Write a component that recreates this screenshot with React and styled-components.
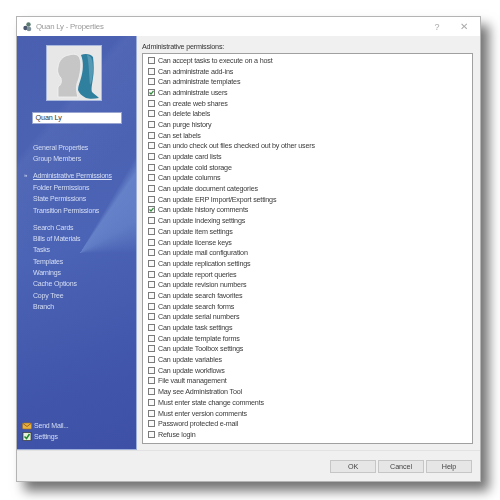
import styled, { createGlobalStyle } from 'styled-components'

const Global = createGlobalStyle`
    html, body {
        margin: 0;
        padding: 0;
        width: 500px;
        height: 500px;
        overflow: hidden;
        background: #fff;
    }
    body {
        font-family: "Liberation Sans", sans-serif;
    }
`;

const Page = styled.div`
    width: 500px;
    height: 500px;
    padding: 16px 0 0 16px;
    box-sizing: border-box;
`;

const Win = styled.div`
    width: 465px;
    height: 466px;
    box-sizing: border-box;
    border: 1px solid #b4b4b4;
    background: #f0f0f0;
    display: flex;
    flex-direction: column;
    box-shadow: 8px 9px 11px rgba(0, 0, 0, 0.55);
    filter: blur(0.4px);
`;

const TitleBar = styled.div`
    height: 19px;
    flex: none;
    background: #fff;
    display: flex;
    align-items: center;
    padding: 0 11px 0 6px;
    color: #999;
    font-size: 7.8px;
    letter-spacing: -0.2px;
`;

const TitleText = styled.span`
    margin-left: 4px;
    flex: 1;
`;

const TitleButton = styled.span`
    font-size: ${p => p.$size || 9}px;
    color: #aaa;
    width: 10px;
    margin-left: ${p => p.$gap || 0}px;
    text-align: center;
`;

const Body = styled.div`
    height: 414px;
    flex: none;
    display: flex;
`;

const Sidebar = styled.div`
    width: 120px;
    flex: none;
    box-sizing: border-box;
    padding: 9px 0 0;
    display: flex;
    flex-direction: column;
    align-items: center;
    border-right: 1px solid #9fb0da;
    border-bottom: 1px solid #9fb0da;
    background:
        conic-gradient(from 30deg at 63px 217px, transparent 0, rgba(135, 170, 228, 0.42) 5deg, rgba(135, 170, 228, 0.34) 30deg, transparent 60deg),
        linear-gradient(130deg, transparent 0 22%, rgba(130, 155, 215, 0.12) 24%, transparent 42%),
        linear-gradient(160deg, #4a5fb0 0, #4c64b5 50%, #4258ac 75%, #3d50a6 100%);
`;

const Avatar = styled.div`
    width: 56px;
    height: 56px;
    margin-right: 6px;
    background: #e7e7e7;
    border: 1px solid #a8b8de;
    box-sizing: border-box;
    flex: none;
`;

const NameField = styled.div`
    width: 90px;
    height: 12px;
    margin-top: 11px;
    box-sizing: border-box;
    background: #fff;
    border: 1px solid #9aa6d0;
    color: #333;
    font-size: 7.2px;
    letter-spacing: -0.1px;
    line-height: 10px;
    padding-left: 3px;
`;

const NavWrap = styled.div`
    align-self: stretch;
    padding: 18px 0 0 16px;
    display: flex;
    flex-direction: column;
    gap: 5.8px;
    flex: 1;
`;

const NavGroup = styled.div`
    display: flex;
    flex-direction: column;
`;

const NavLink = styled.div`
    position: relative;
    height: 11.35px;
    line-height: 11.35px;
    font-size: 7px;
    letter-spacing: -0.2px;
    white-space: nowrap;
    color: #d5def5;
    text-decoration: ${p => (p.$active ? 'underline' : 'none')};
    &:before {
        content: ${p => (p.$active ? "'»'" : 'none')};
        position: absolute;
        left: -9px;
        font-size: 6px;
    }
`;

const Footer = styled.div`
    padding: 0 0 7px 5px;
    align-self: stretch;
    display: flex;
    flex-direction: column;
`;

const FooterLink = styled.div`
    display: flex;
    align-items: center;
    gap: 2px;
    height: 11px;
    font-size: 7px;
    letter-spacing: -0.2px;
    color: #d5def5;
`;

const Main = styled.div`
    flex: 1;
    min-width: 0;
    padding: 5px 7px 0 5px;
    display: flex;
    flex-direction: column;
`;

const Caption = styled.div`
    font-size: 7.2px;
    letter-spacing: -0.2px;
    height: 12px;
    line-height: 11px;
    color: #333;
`;

const ListBox = styled.div`
    height: 391px;
    box-sizing: border-box;
    background: #fff;
    border: 1px solid #a0a0a0;
    padding: 1px 0 0 5px;
    display: flex;
    flex-direction: column;
`;

const Row = styled.div`
    height: 10.69px;
    flex: none;
    display: flex;
    align-items: center;
    gap: 3px;
    font-size: 7.2px;
    letter-spacing: -0.2px;
    color: #3a3a3a;
    white-space: nowrap;
`;

const Box = styled.span`
    width: 7px;
    height: 7px;
    flex: none;
    box-sizing: border-box;
    border: 1px solid #7a7a7a;
    background: #fafafa;
    display: flex;
`;

const BottomBar = styled.div`
    flex: 1;
    display: flex;
    align-items: center;
    justify-content: flex-end;
    gap: 2px;
    padding-right: 8px;
    border-top: 1px solid #e2e2e2;
`;

const Button = styled.div`
    width: 46px;
    height: 13px;
    box-sizing: border-box;
    border: 1px solid #c6c6c6;
    background: #e6e6e6;
    color: #444;
    font-size: 7.2px;
    letter-spacing: -0.1px;
    line-height: 11px;
    text-align: center;
`;

const perms = [
    ['Can accept tasks to execute on a host'],
    ['Can administrate add-ins'],
    ['Can administrate templates'],
    ['Can administrate users', true],
    ['Can create web shares'],
    ['Can delete labels'],
    ['Can purge history'],
    ['Can set labels'],
    ['Can undo check out files checked out by other users'],
    ['Can update card lists'],
    ['Can update cold storage'],
    ['Can update columns'],
    ['Can update document categories'],
    ['Can update ERP Import/Export settings'],
    ['Can update history comments', true],
    ['Can update indexing settings'],
    ['Can update item settings'],
    ['Can update license keys'],
    ['Can update mail configuration'],
    ['Can update replication settings'],
    ['Can update report queries'],
    ['Can update revision numbers'],
    ['Can update search favorites'],
    ['Can update search forms'],
    ['Can update serial numbers'],
    ['Can update task settings'],
    ['Can update template forms'],
    ['Can update Toolbox settings'],
    ['Can update variables'],
    ['Can update workflows'],
    ['File vault management'],
    ['May see Administration Tool'],
    ['Must enter state change comments'],
    ['Must enter version comments'],
    ['Password protected e-mail'],
    ['Refuse login'],
]

const navGroups = [
    ['General Properties', 'Group Members'],
    ['Administrative Permissions', 'Folder Permissions', 'State Permissions', 'Transition Permissions'],
    ['Search Cards', 'Bills of Materials', 'Tasks', 'Templates', 'Warnings', 'Cache Options', 'Copy Tree', 'Branch'],
]

function Check() {
    return (
        <svg width="5" height="5" viewBox="0 0 5 5">
            <path d="M0.5 2.5 L2 4 L4.5 0.8" fill="none" stroke="#2f8a3a" strokeWidth="1.2" />
        </svg>
    )
}

function AppIcon() {
    return (
        <svg width="9" height="10" viewBox="0 0 9 10">
            <circle cx="5.5" cy="2.5" r="2.2" fill="#5a7a70" />
            <circle cx="2.5" cy="6" r="2.2" fill="#49566e" />
            <circle cx="6" cy="7" r="2.3" fill="#7d8f98" />
        </svg>
    )
}

function Person() {
    return (
        <svg width="54" height="54" viewBox="1 1 54 54">
            <path d="M35 10 C39 8 45 9 47 12 C48 20 48 27 47 33 C46 40 45 44 46 47 C48 49 51 51 53 53 C48 54 43 54 40 53 C36 51 33 48 32 45 C32 41 34 37 35 33 C37 27 38 17 35 10 Z" fill="#2f7f9f" />
            <path d="M41 10 C46 11 47 16 47 24 C47 31 46 37 44 40 C43 30 43 18 41 10 Z" fill="#6aa7c0" opacity="0.65" />
            <path d="M23 10 C29 8 33 10 34 14 C36 20 34 30 32 36 C30 40 30 46 32 52 L12 52 L12 42 C15 40 16 37 15 33 C12 30 11 26 12 22 C13 15 17 11 23 10 Z" fill="#c6c6c6" stroke="#f4f4f4" strokeWidth="0.8" />
        </svg>
    )
}

function MailIcon() {
    return (
        <svg width="10" height="8" viewBox="0 0 10 8">
            <rect x="0.5" y="1" width="9" height="6" rx="1" fill="#e8b23e" stroke="#a06a20" strokeWidth="0.6" />
            <path d="M1 1.5 L5 4.5 L9 1.5" fill="none" stroke="#8f4f20" strokeWidth="0.8" />
        </svg>
    )
}

function SettingsIcon() {
    return (
        <svg width="10" height="10" viewBox="0 0 10 10">
            <rect x="1" y="0.5" width="8" height="8" fill="#e8f0d8" stroke="#333" strokeWidth="0.7" />
            <path d="M2.5 4.5 L4.5 6.5 L7.5 2" fill="none" stroke="#1e8a2e" strokeWidth="1.5" />
        </svg>
    )
}

export default function App() {
    return (
        <Page>
            <Global />
            <Win>
                <TitleBar>
                    <AppIcon />
                    <TitleText>Quan Ly - Properties</TitleText>
                    <TitleButton>?</TitleButton>
                    <TitleButton $gap={17} $size={10}>✕</TitleButton>
                </TitleBar>
                <Body>
                    <Sidebar>
                        <Avatar><Person /></Avatar>
                        <NameField>Quan Ly</NameField>
                        <NavWrap>
                            {navGroups.map((group) => (
                                <NavGroup key={group[0]}>
                                    {group.map((name) => (
                                        <NavLink key={name} $active={name === 'Administrative Permissions'}>{name}</NavLink>
                                    ))}
                                </NavGroup>
                            ))}
                        </NavWrap>
                        <Footer>
                            <FooterLink><MailIcon />Send Mail...</FooterLink>
                            <FooterLink><SettingsIcon />Settings</FooterLink>
                        </Footer>
                    </Sidebar>
                    <Main>
                        <Caption>Administrative permissions:</Caption>
                        <ListBox>
                            {perms.map(([label, checked]) => (
                                <Row key={label}>
                                    <Box>{checked && <Check />}</Box>
                                    {label}
                                </Row>
                            ))}
                        </ListBox>
                    </Main>
                </Body>
                <BottomBar>
                    <Button>OK</Button>
                    <Button>Cancel</Button>
                    <Button>Help</Button>
                </BottomBar>
            </Win>
        </Page>
    )
}
